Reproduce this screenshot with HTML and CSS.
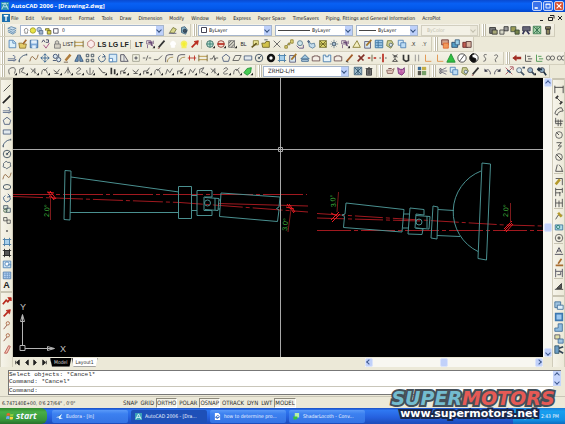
FILE: index.html
```html
<!DOCTYPE html>
<html lang="en">
<head>
<meta charset="utf-8">
<title>AutoCAD 2006 - [Drawing2.dwg]</title>
<link rel="stylesheet" href="styles.css">
</head>
<body>
<header class="title">
  <svg class="app-icon" viewBox="0 0 10 10"><rect width="10" height="10" fill="#2b8fb0"/><path d="M1 9 5 1l4 8M3 6h5M1 2h3M7 2h2" fill="none" stroke="#d9f4f4"/></svg>
  <h1>AutoCAD 2006 - [Drawing2.dwg]</h1>
  <div class="window-buttons">
    <button aria-label="Minimize"><svg viewBox="0 0 10 10"><path d="M2 7.500h4" stroke="#fff" stroke-width="2"/></svg></button>
    <button aria-label="Restore"><svg viewBox="0 0 10 10"><path d="M2.500 2.500h5v5h-5zM2 3h6" fill="none" stroke="#fff"/></svg></button>
    <button class="close" aria-label="Close"><svg viewBox="0 0 10 10"><path d="m2 2 6 6M8 2 2 8" stroke="#fff" stroke-width="1.500"/></svg></button>
  </div>
</header>
<nav class="menu">
  <svg class="doc-icon" viewBox="0 0 9 9"><rect width="9" height="9" fill="#1c6fae"/><path d="M2 2h5M4.500 2v6" stroke="#fff" stroke-width="1.500"/></svg>
  <a href="#">File</a><a href="#">Edit</a><a href="#">View</a><a href="#">Insert</a><a href="#">Format</a><a href="#">Tools</a><a href="#">Draw</a><a href="#">Dimension</a><a href="#">Modify</a><a href="#">Window</a><a href="#">Help</a><a href="#">Express</a><a href="#">Paper Space</a><a href="#">TimeSavers</a><a href="#">Piping, Fittings and General Information</a><a href="#">AcroPlot</a>
  <div class="doc-buttons">
    <button aria-label="Minimize drawing"><svg viewBox="0 0 8 8"><path d="M2 6.500h3" stroke="#222"/></svg></button>
    <button aria-label="Restore drawing"><svg viewBox="0 0 8 8"><path d="M3 1.500h4v3M1.500 3.500h4v3h-4z" fill="none" stroke="#222"/></svg></button>
    <button aria-label="Close drawing"><svg viewBox="0 0 8 8"><path d="m2 2 4 4M6 2 2 6" stroke="#222"/></svg></button>
  </div>
</nav>

<section class="row">
  <div class="bar">
    <div class="icons" data-icons="layers"></div>
    <div class="combo layer">
      <svg viewBox="0 0 42 10"><path d="M3 6a2 2 0 1 1 3 0v2H3z" fill="#fff" stroke="#888"/><circle cx="12" cy="5" r="3" fill="#e8e448" stroke="#a5a02c"/><circle cx="19" cy="4" r="2.500" fill="#b4c4dc" stroke="#6d86a8"/><path d="M19 5h4v4h-4z" fill="#9fb2cc" stroke="#5f7595"/><path d="M26 5V3h4v3M28 5h4v4h-4z" fill="#d8d24a" stroke="#77702a"/><path d="M35 3h5v5h-5z" fill="#fff" stroke="#556"/></svg>
      <select aria-label="Layer"><option>0</option></select>
    </div>
    <div class="icons" data-icons="prevlayer|layers2"></div>
  </div>
  <div class="bar">
    <div class="combo color"><svg viewBox="0 0 6 6"><path d="M.500.500h5v5h-5z" fill="#fff" stroke="#445"/></svg><select aria-label="Color"><option>ByLayer</option></select></div>
    <div class="combo linetype"><i class="sample"></i><select aria-label="Linetype"><option>ByLayer</option></select></div>
    <div class="combo weight"><i class="sample"></i><select aria-label="Lineweight"><option>ByLayer</option></select></div>
    <div class="combo plot"><select aria-label="Plot style" disabled><option>ByColor</option></select></div>
  </div>
  <div class="bar"><div class="icons" data-icons="blk1|blk2|blk3|blk4|gridg|blk5"></div></div>
</section>
<section class="row tall">
  <div class="bar standard"><div class="icons" data-icons="new|open|save|spell|lock|t:LIST|dist|poly|b:LS|b:LG|b:LF|-|b:LT|tools|pen|bulbw|bulby|redarrow|-|globe|globered|hatch|t:BL|ycopy|folder|cross|nodes|lens|hand|ygrid|burst|tools|ytri|pencilbox|bgrid|paste|copyb|t:.X|t:.Y"></div></div>
  <div class="bar"><div class="icons" data-icons="orangebox|bluebox|redbox"></div></div>
</section>
<section class="row">
  <div class="bar modify"><div class="icons" data-icons="pline|arc|spline|move|copy|pencil|mirror|array|rotate|scale|stretch|point|break1|break2|fillet|fillet|reddim|dist|wave|poly2|para|rect|compass|donut|crop|pencilbox|btri|tab|tabb|tab|pen2|redtool|redcross|redbar|figure|u|bars|ol|ol|gtri|noslash|yin|s|q"></div></div>
  <div class="bar last"><div class="icons" data-icons="redleft|lab|labg|eyes|eyes"></div></div>
</section>
<section class="row">
  <div class="bar lisp"><div class="icons" data-icons="n1|n2|n3|n4|n5|n6|n7|n8|n9|n10|n11|n5|n11|n4|n12|n11|n12|n2|n3|n7|n4|green"></div></div>
  <div class="bar gapped"><div class="combo style"><select aria-label="Text style"><option>ZRHD-L/H</option></select></div><div class="icons" data-icons="bgridd|trash"></div></div>
  <div class="bar gapped"><div class="icons" data-icons="teapot|cat"></div></div>
  <div class="bar gapped"><div class="icons" data-icons="palette"></div></div>
  <div class="bar gapped"><div class="icons" data-icons="cut|copyb|paste|pen|undo|redo|pan|zoom|zoomd|zoomp"></div></div>
</section>

<main class="work">
  <aside class="side left">
    <div class="icons" data-icons="line|xline|pline|poly2|rect|arc|compass|cloud|spline|ellipse|rotate|insert|block|dot|crop|darkgrid|region|table|b:A"></div>
    <div class="icons loose" data-icons="redpoly|redarrow|redtag|redtag|redpen"></div>
  </aside>
  <svg class="drawing" viewBox="13 78 530 279" role="img" aria-label="Driveline drawing">
    <g class="axis">
      <path d="M13 194.500H307" stroke-dasharray="40 3 4 3"/>
      <path d="M13 196.500 180 202.500 308 212" stroke-dasharray="30 3 4 3"/>
      <path d="M218 203.500 308 206"/>
      <path d="M317 213.500 404 219 505 225 543 226" stroke-dasharray="28 3 4 3"/>
      <path d="M317 218 420 221" stroke-dasharray="28 3 4 3"/>
      <path d="M317 230.500H543" stroke-dasharray="34 3 4 3"/>
    </g>
    <g class="part">
      <path d="M65 170.500 71 171 70 220 64 219.500ZM71 177 179 192M70 212.500H179M178.500 186.500h13v32h-13zM191.500 195.500h5.500M191.500 210.500h5.500"/>
      <path d="M197 190.500h15v6.500h-8v13.500h8v5h-15zM205 197.500 219 198.500 218 210.500 205 209.500M215 198v12M219 200h2M218 209h2"/>
      <circle cx="207.500" cy="203" r="3"/>
      <path d="M221 193 280 197 279 207 276.500 208.500 279 210 277.500 221.500 219.500 216.500Z"/>
      <path d="M346 203 404 209.500 402 232 343.500 227.500 344.500 216.500 342 215 345 214ZM404 214h5M403 228h5"/>
      <path d="M410 208 424 209.500 424 215 416 214 415 228 423 229 422 234.500 408 234ZM416 215.500 430 216.500 429 229 416 228M427 216v12"/>
      <circle cx="419" cy="222" r="3"/>
      <path d="M433 206 438 207 437 239 431 238ZM438 209.500 454 210.500M437 235.500 460 236.500M481 171A44 44 0 0 0 478 251.500M482 163 490.500 164 486.500 260 478 258.500Z"/>
    </g>
    <g class="mark">
      <path d="m48 192 6 8M50 191l6 8M47 192l7 1M49 196l6 3"/>
      <path d="m287 204 7 9M289 204l6 8M286 207l8 2"/>
      <path d="m331 220 8-8M332 222l8-8M331 213l6 3"/>
      <path d="m504 229 8-8M504 231l8-8M506 232l7-8"/>
    </g>
    <path class="leader" d="M50.500 195v25M291 209l-3 23M338.500 192 337 212M510.500 203v20"/>
    <g class="angle">
      <text transform="translate(49 217) rotate(-88)">2.0°</text>
      <text transform="translate(287 231) rotate(-84)">3.0°</text>
      <text transform="translate(336 207) rotate(-94)">3.0°</text>
      <text transform="translate(508 217) rotate(-88)">2.0°</text>
    </g>
    <g class="cursor"><path d="M13 149.500H543M280.500 78V357"/><path d="M278.500 147.500h4v4h-4z"/></g>
    <g class="ucs"><path d="M20 345.500h5v5h-5zM22.500 345.500V315M25 348.500H54M22.500 314.500l-2 7h4zM54.500 348.500l-7-2v4z"/>
      <text x="20" y="310">Y</text><text x="60" y="352">X</text></g>
  </svg>
  <div class="scroll vertical">
    <button class="up" aria-label="Scroll up"></button><i class="thumb"></i><button class="down" aria-label="Scroll down"></button>
  </div>
  <aside class="side right">
    <div class="icons" data-icons="dimh|dima|arcd|ord|-|circ|jog|diam|ang|-|quick|base|cont|-|lead|tol|center|-|edit|tedit|upd|-|dstyle"></div>
    <div class="icons order" data-icons="o1|o2|o3|o4|o5"></div>
  </aside>
  <div class="tabs">
    <div class="tab-nav">
      <button aria-label="First tab"><svg viewBox="0 0 8 8"><path d="M2 2v4M6 1v6L3 4z"/></svg></button>
      <button aria-label="Previous tab"><svg viewBox="0 0 8 8"><path d="M6 1v6L3 4z"/></svg></button>
      <button aria-label="Next tab"><svg viewBox="0 0 8 8"><path d="M2 1v6l3-3z"/></svg></button>
      <button aria-label="Last tab"><svg viewBox="0 0 8 8"><path d="M2 1v6l3-3zM6 2v4"/></svg></button>
    </div>
    <button class="tab active">Model</button><button class="tab">Layout1</button>
    <div class="scroll horizontal">
      <button class="prev" aria-label="Scroll left"></button><i class="thumb"></i><button class="next" aria-label="Scroll right"></button>
    </div>
  </div>
</main>

<section class="command">
  <div class="console">
    <p>Select objects: *Cancel*</p>
    <p>Command: *Cancel*</p>
    <div class="prompt"><label for="cmd">Command:</label><input id="cmd" type="text" autocomplete="off"></div>
  </div>
  <div class="command-scroll"><button class="up" aria-label="Scroll history up"></button><button class="down" aria-label="Scroll history down"></button></div>
</section>
<section class="status">
  <output>6.747140E+00, 0'6 27/64" , 0'0"</output>
  <button>SNAP</button><button>GRID</button><button class="on">ORTHO</button><button>POLAR</button><button class="on">OSNAP</button><button>OTRACK</button><button>DYN</button><button>LWT</button><button class="on">MODEL</button>
</section>
<footer class="taskbar">
  <button class="start"><svg viewBox="0 0 10 10"><path d="M1 2q2-1.500 4 0L4.500 5q-2-1-4 0z" fill="#f0602c"/><path d="M5.500 2q2 1.500 4 0L9 5q-2 1-4 0z" fill="#8ccf3c"/><path d="M.500 5.500q2-1 4 0L4 9Q2 8 0 9z" fill="#6ca8f8"/><path d="M5 5.500q2 1.500 4 0L8.500 9q-2 1-4 0z" fill="#fcd53c"/></svg>start</button>
  <button class="task"><svg viewBox="0 0 8 8"><path d="M0 5 7 1 5 5 8 6 4 7 3 5z" fill="#dff2ff"/><path d="m2 4 3-2" stroke="#2a6fae"/></svg>Eudora - [In]</button>
  <button class="task current"><svg viewBox="0 0 8 8"><rect width="8" height="8" fill="#3aa0b8"/><path d="m1 7 3-6 3 6M2 5h4" fill="none" stroke="#e4fbfb"/></svg>AutoCAD 2006 - [Dra...</button>
  <button class="task"><svg viewBox="0 0 8 8"><path d="M1 0h4l2 2v6H1z" fill="#fff"/><path d="M2 5q2-4 4-1Q4 8 2 5h4" fill="none" stroke="#2b66c8"/></svg>how to determine pro...</button>
  <button class="task"><svg viewBox="0 0 8 8"><path d="M2 0h5v5H2z" fill="#b8f0a8"/><path d="M0 4h5v3H3L1 8z" fill="#38c43c"/></svg>ShadarLocoth - Conv...</button>
  <div class="tray"><svg viewBox="0 0 16 8"><circle cx="4" cy="4" r="3" fill="#3b9df0" stroke="#9ed4ff"/><path d="m5 2-2 2 2 2" fill="none" stroke="#fff"/><circle cx="12" cy="4" r="3" fill="#a8d848"/></svg><time>2:43 PM</time></div>
</footer>
<div class="watermark"><strong><span>SUPER</span><em>MOTORS</em></strong><small>www.supermotors.net</small></div>
<script src="icons.js"></script>
</body>
</html>
```

FILE: styles.css
```css
* { box-sizing: border-box; }
html, body { height: 100%; }
body {
  --face: #ece9d8;
  --ink: #2b2b2b;
  margin: 0;
  display: flex;
  flex-direction: column;
  position: relative;
  overflow: hidden;
  background: var(--face);
  color: var(--ink);
  font: 5px/8px "DejaVu Sans Condensed", "DejaVu Sans", sans-serif;
}
button {
  margin: 0;
  padding: 0;
  border: 0;
  background: none;
  color: inherit;
  font: inherit;
  white-space: nowrap;
}
h1, p { margin: 0; font: inherit; }
svg { display: block; flex: none; }

.title {
  flex: none;
  height: 12px;
  display: flex;
  align-items: center;
  gap: 2px;
  padding: 0 1px;
  background: linear-gradient(#0a4ad0, #0860f4 30%, #0358ea 70%, #0246cc);
  color: #fff;
}
.title h1 { flex: 1; font: bold 6px/10px "Open Sans", sans-serif; }
.app-icon { width: 8px; height: 8px; }
.window-buttons { display: flex; gap: 1px; }
.window-buttons button { width: 10px; height: 10px; border: 1px solid #c3d3f8; border-radius: 2px; background: #3a72ea; }
.window-buttons .close { background: #da5030; }

.menu { flex: none; height: 12px; display: flex; align-items: center; gap: 7px; padding: 0 1px; }
.menu a { color: #111; text-decoration: none; white-space: nowrap; }
.doc-icon { width: 8px; height: 8px; margin-right: -6px; margin-left: 1px; }
.doc-buttons { margin-left: auto; display: flex; gap: 1px; }
.doc-buttons button { width: 8px; height: 8px; }

.row { flex: none; height: 13px; display: flex; gap: 1px; }
.row.tall { height: 15px; }
.bar {
  flex: none;
  display: flex;
  align-items: center;
  gap: 3px;
  padding: 0 1px 0 6px;
  border-right: 1px solid #d0ccba;
  border-bottom: 1px solid #d4d0be;
  background: linear-gradient(90deg, transparent 1px, #fff 1px 2px, #bfbba8 2px 3px, #fff 3px 4px, #bfbba8 4px 5px, transparent 5px), linear-gradient(#f4f2e8, var(--face));
}
.bar.gapped { padding-right: 2px; }
.bar.standard { width: 432px; }
.bar.modify { width: 504px; }
.bar.lisp { width: 256px; }
.bar.last { flex: 1; overflow: hidden; }
.icons { flex: none; display: flex; align-items: center; }
.standard .icons, .modify .icons, .lisp .icons { flex: 1; }
.standard .tool, .modify .tool, .lisp .tool { flex: 1 1 0; }
.tool { width: 11px; height: 11px; display: grid; place-items: center; }
.tool svg { width: 10px; height: 10px; fill: none; stroke: #333; stroke-width: 1; }
.tool.word { font: 5px/11px "Liberation Sans", sans-serif; color: #222; }
.tool.strong { font: bold 7px/11px "Liberation Sans", sans-serif; color: #222; }
.split { flex: none; width: 3px; height: 9px; border-left: 1px solid #c8c4b2; }

.combo {
  position: relative;
  display: flex;
  align-items: center;
  height: 11px;
  border: 1px solid #a5b5cc;
  background: #fff;
}
.combo::after {
  content: "";
  position: absolute;
  right: 0;
  top: 0;
  width: 7px;
  height: 9px;
  background: #bdd0fa;
  pointer-events: none;
}
.combo::before {
  content: "";
  position: absolute;
  z-index: 1;
  right: 2px;
  top: 2px;
  width: 3px;
  height: 3px;
  border: solid #35517f;
  border-width: 0 1px 1px 0;
  transform: rotate(45deg);
  pointer-events: none;
}
.combo select {
  flex: 1;
  min-width: 0;
  height: 9px;
  padding: 0 2px;
  border: 0;
  appearance: none;
  background: none;
  color: #222;
  font: inherit;
}
.combo svg { width: 6px; height: 6px; margin-left: 2px; }
.layer { width: 144px; }
.layer svg { width: 38px; height: 9px; margin-left: 1px; }
.color { width: 74px; }
.linetype { width: 78px; }
.weight { width: 62px; }
.plot { width: 57px; border-color: #d2cfc0; background: #f3f1e6; }
.plot select { padding-left: 5px; color: #c2bfae; opacity: 1; }
.plot::after { background: #ebe8da; }
.plot::before { border-color: #c2bfae; }
.style { width: 86px; }
.style select { font-size: 6px; padding-left: 4px; }
.sample { width: 32px; height: 1px; margin-left: 2px; background: #444; }
.weight .sample { width: 17px; }

.work {
  flex: 1;
  min-height: 0;
  display: grid;
  grid-template: minmax(0, 1fr) 10px / 13px minmax(0, 1fr) 9px 13px;
}
.side { grid-row: 1 / 3; display: flex; flex-direction: column; align-items: center; background: linear-gradient(90deg, #f6f4ea, var(--face)); border: solid #d0ccba; border-width: 0 1px; }
.side .icons { flex-direction: column; padding-top: 2px; border-top: 2px solid #c9c5b3; }
.side .split { width: 9px; height: 2px; border: 0; border-top: 1px solid #c8c4b2; }
.left .loose .tool { height: 12px; }
.left .tool.strong { font-size: 9px; }
.right .icons { padding-top: 3px; }
.right .order { margin-top: 4px; }
.drawing { width: 100%; height: 100%; background: #000; fill: none; stroke-width: 1; }
.axis { stroke: #a0191f; }
.part { stroke: #4a9090; }
.mark { stroke: #f01c22; }
.leader { stroke: #7c1a1c; }
.angle { fill: #3fae3c; font: 7px "Liberation Sans", sans-serif; }
.cursor { stroke: #a8a8a8; }
.ucs { stroke: #b4b4b4; }
.ucs text { fill: #c0c0c0; stroke: none; font: 9px "Liberation Sans", sans-serif; }

.scroll { display: flex; align-items: center; justify-content: space-between; background: #f8f7f1; }
.vertical { flex-direction: column; }
.scroll button, .thumb { width: 8px; height: 9px; border: 1px solid #dbe4fb; border-radius: 2px; background: #c1d1fa; }
.up, .down, .prev, .next { display: grid; place-items: center; }
.up::before, .down::before, .prev::before, .next::before {
  content: "";
  width: 3px;
  height: 3px;
  border: solid #3f5a90;
  border-width: 1px 1px 0 0;
  transform: rotate(-45deg);
}
.down::before { transform: rotate(135deg); }
.prev::before { transform: rotate(-135deg); }
.next::before { transform: rotate(45deg); }
.vertical .thumb { margin-top: 20px; }
.horizontal { width: 178px; margin-left: auto; }
.horizontal .thumb { margin-right: 20px; }

.tabs { grid-column: 2 / 4; grid-row: 2; display: flex; align-items: center; padding-right: 9px; }
.tab-nav { display: flex; margin-right: 1px; }
.tab-nav button { width: 9px; height: 8px; display: grid; place-items: center; }
.tab-nav svg { width: 7px; height: 7px; fill: #222; stroke: #222; stroke-width: 1; }
.tab { height: 9px; padding: 0 3px; background: #fff; border: solid #555; border-width: 0 1px 1px; clip-path: polygon(0 0, 100% 0, calc(100% - 2px) 100%, 2px 100%); }
.tab.active { background: #000; color: #ddd; }

.command { flex: none; height: 29px; display: flex; padding: 3px 4px 1px 8px; }
.console { flex: 1; border: 1px solid #777; border-right: 0; background: #fff; font: 6px/7px "Liberation Mono", monospace; display: flex; flex-direction: column; }
.prompt { flex: 1; margin-top: 1px; display: flex; align-items: center; border-top: 1px solid #c9c6ba; }
.prompt input { flex: 1; min-width: 0; height: 7px; padding: 0 2px; border: 0; outline: 0; background: none; font: inherit; }
.command-scroll { width: 8px; height: 16px; background: #fff; border-top: 1px solid #777; display: flex; flex-direction: column; }
.command-scroll button { flex: 1; background: #c6d5fb; }

.status { flex: none; height: 12px; display: flex; align-items: center; gap: 1px; padding: 0 2px; border-top: 1px solid #c9c6b6; font-size: 6px; }
.status output { width: 119px; font-size: 5px; }
.status button { height: 10px; line-height: 8px; border: 1px solid transparent; }
.status .on { border-color: #8d8a7c #fff #fff #8d8a7c; background: #f4f2e8; }

.taskbar { flex: none; height: 16px; display: flex; align-items: center; gap: 3px; background: linear-gradient(#1a4fc4, #2f78f2 15%, #2560de 60%, #1c4bb8); color: #f0f6ff; }
.start { width: 47px; height: 16px; margin-right: 2px; display: flex; align-items: center; gap: 2px; padding: 0 6px; border-radius: 0 6px 6px 0; background: linear-gradient(#2f8a2e, #48ae47 25%, #37953a 75%, #27702a); font: italic bold 9px/14px "Open Sans", sans-serif; }
.start svg { width: 8px; height: 8px; }
.task { width: 76px; height: 13px; display: flex; align-items: center; gap: 3px; padding: 0 4px; border-radius: 2px; background: linear-gradient(#5a9af8, #3c80f0 30%, #3474e4); overflow: hidden; }
.task svg { width: 7px; height: 7px; }
.task.current { background: #1e50b8; }
.tray { margin-left: auto; width: 52px; height: 16px; display: flex; align-items: center; justify-content: flex-end; gap: 4px; padding: 0 6px 0 0; background: linear-gradient(#1a7cd8, #18a0f0 20%, #1290e4 75%, #0c6cc0); }
.tray svg { width: 16px; height: 8px; }

.watermark { position: absolute; right: 6px; bottom: 4px; width: 172px; display: flex; flex-direction: column; align-items: center; font-family: "DejaVu Sans", sans-serif; font-weight: bold; -webkit-text-stroke: 4px #444f58; paint-order: stroke fill; }
.watermark strong { font: italic bold 19px/19px "DejaVu Sans", sans-serif; color: #74bccf; }
.watermark em { color: #e65a55; }
.watermark small { padding-right: 8px; font-size: 11px; line-height: 12px; color: #fff; -webkit-text-stroke-color: #18264a; }
```

FILE: icons.js
```js
// Stroke-based tool icons on a 12x12 grid.
const p = (d, stroke = '#333', fill = 'none', w = 1) =>
  `<path d="${d}" stroke="${stroke}" fill="${fill}" stroke-width="${w}"/>`;
const c = (x, y, r, stroke = '#333', fill = 'none', w = 1) =>
  `<circle cx="${x}" cy="${y}" r="${r}" stroke="${stroke}" fill="${fill}" stroke-width="${w}"/>`;
const BLUE = '#4a7fb4', GOLD = '#b59a2c', RED = '#b8281c', ORANGE = '#e08a3c';
const corner = p('M9 11h3V8z', 'none', '#222');

const ICONS = {
  layers: p('M1 4 5 2l6 2-4 2zM1 6l6 3 4-3M1 8l6 3 4-3', '#5d86a8', '#c6dcec'),
  prevlayer: p('M2 9 6 3l4 2-3 5z', '#777a3c', '#d8d68c') + p('M1 10h9', '#557'),
  layers2: p('M3 3l4-1 3 4-2 5-5-2z', '#3c5f78', '#8fb6c8') + c(7, 7, 2, '#234', '#456'),
  blk1: p('M2 3h7v7H2z', '#333', '#777') + p('M5 6h6v5H5z', '#333', '#a8a878'),
  blk2: p('M6 2h5v5H6z', '#333', '#999') + p('M1 6h5v5H1z', '#444', '#d8d8c8'),
  blk3: p('M1 2h6v6H1z', '#454', '#9b9b54') + p('M6 6h5v5H6z', '#343', '#77834c'),
  blk4: p('M2 2h9v5H2z', '#334', '#667') + p('M4 7l-2 4M7 7l3 4', '#335', 'none', 2),
  gridg: p('M1.500 1.500h9v9h-9z', '#377a4c', '#a5d0a8') + p('m2 2 8 8M10 2l-8 8M6 2v8', '#2c6b48'),
  blk5: p('M3 2h6v3H3zM4 5h4v6H4z', '#333', '#8b845c'),
  new: p('M2.500 1.500h5l3 3v6h-8z', BLUE, '#dcf0fa') + p('M7 2v3h3', BLUE),
  open: p('M1 5h4l1 1h4l-1 5H2z', '#8b7430', '#e3cb68') + p('m6 6 4-5', '#a5682c', 'none', 2),
  save: p('M1.500 1.500h9v9h-9z', '#34659c', '#7ea9d8') + p('M3 2h6v3H3zM4 8h4v3H4z', '#cfe2f4', '#e8f2fa'),
  spell: p('M1 4 3 1l2 3M6 1h3v3H6', '#335') + p('M3 7l3 4 4-6', '#a0407c'),
  lock: p('M3 6h7v5H3zM4 6V3l2-1 2 1v3', '#777', '#d4d0c4'),
  dist: p('M1 4h10M1 8h10', '#b08c30', 'none', 1) + p('M1 2v8M11 2v8', '#6b5828'),
  poly: p('M6 1 10 4v4l-4 3-4-3V4z', '#b87470', '#fbecec'),
  tools: p('M2 2h5v4H2zM7 6l4 4M3 11V7M10 2v4', '#7c6084', 'none', 1) + p('M4 4h4v4', '#6c4c78', 'none', 2) + corner,
  pen: p('m2 10 7-8', '#333', 'none', 2) + p('M1 11h2', '#833'),
  pen2: p('m2 10 7-8', '#a05c28', 'none', 2) + p('M1 10l3 1', '#333'),
  bulbw: p('M4 8a3 3 0 1 1 4 0v2H4z', '#fff', '#fff'),
  bulby: p('M4 8a3 3 0 1 1 4 0v2H4z', '#f4ee60', '#f4f030', 2),
  redarrow: p('m2 10 5-5', RED, 'none', 2) + p('M5 3l5-1-1 5z', RED, RED),
  globe: c(6, 6, 4, '#34655c', '#b8dcd0') + p('M6 2v8M2 6h8', '#2b786b') + corner,
  globered: c(6, 6, 4, '#883028', '#f4dcd0') + p('M2 6h8', RED, 'none', 2) + corner,
  hatch: p('M2 2h7v8H2z', '#777', '#d4d2c6') + p('m2 5 3-3M2 9l7-7M5 10l4-4', '#555') + corner,
  ycopy: p('M4 2h6v5H4z', '#8a8235', '#efe99a') + p('m2 10 6-5', '#665a20', 'none', 2),
  folder: p('M1 5h4l1-2h4v7H2z', '#6f6420', '#d2c24c') + p('M4 1h4', '#456'),
  cross: p('m2 2 8 8M10 2l-8 8', '#555'),
  nodes: p('M3 8l5-4', '#555') + p('M1 8h3v3H1zM8 1h3v4H8zM5 5h2v2H5z', '#8a7d2c', '#e6dc80'),
  lens: c(6, 5, 3, '#557a8c', '#cfe4ea') + p('M2 8l3 3h5V7', '#547'),
  hand: p('M3 2l3 4 4-1 1 4-3 2-4-2z', '#577e9c', '#c4dcec') + c(3, 3, 1, '#346'),
  ygrid: p('M2 2h8v8H2z', '#6f6a2a', '#e2da70') + p('m2 2 8 8M2 6h8M10 2l-8 8', '#665f22'),
  burst: p('M6 1v10M1 6h10M3 3l6 6M9 3 3 9', '#66808c') + c(6, 6, 2, '#567', '#a5bdd0'),
  ytri: p('M6 2 10 10H1z', '#82772a', '#f4efc0'),
  pencilbox: p('M2 3h7v8H2z', '#557', '#d7e6ef') + p('m4 8 6-7', '#a5762c', 'none', 2),
  bgrid: p('M1.500 1.500h9v9h-9z', '#2f6c9c', '#a5cdec') + p('M2 4.500h8M2 7.500h8M5 2v8', '#386f98'),
  bgridd: p('M1.500 1.500h9v9h-9z', '#41617c', '#9bb8c8') + p('m2 2 8 8M10 2l-8 8M6 2v8', '#2f5168'),
  paste: p('M3 2h5l2 4-3 5-5-3z', '#73783a', '#d0d294') + c(7, 7, 2, '#567', '#dbe8ee'),
  copyb: p('M1.500 1.500h6v6h-6z', BLUE, '#d8ecf8') + p('M4.500 4.500h6v6h-6z', BLUE, '#bcdcf4'),
  orangebox: p('M2 1h8v6H2z', '#633', '#d4a48c') + p('M4 5h6v6H4z', '#e0662c', '#f09a5c'),
  bluebox: p('M1 4h7v6H1z', '#246', '#54a0c8') + p('M5 1h5v6H5z', '#357', '#9cd0e8'),
  redbox: p('M1 4h6v6H1z', '#622', '#c05c50') + p('M5 3h6v7H5z', '#533', '#d9b4a0'),
  pline: p('M1 7h7a2 2 0 0 0-1-4M1 9h8M8 7l3 1-3 2', '#556688'),
  arc: p('M1 10Q3 3 10 2', '#334c6c') + p('M1 10h1M10 2h1', '#234', 'none', 2),
  spline: p('M1 10Q3 1 6 6t5-4', '#8a6238'),
  move: p('M6 1v10M1 6h10M4 3l2-2 2 2M4 9l2 2 2-2M3 4 1 6l2 2M9 4l2 2-2 2', '#2d5c8c'),
  copy: c(4, 4, 2.5, '#346', '#dbe8f0') + c(8, 8, 2.5, '#346', '#dbe8f0') + p('M8 1v4M1 9h4', '#346'),
  pencil: p('m3 9 6-7', '#b07d3c', 'none', 3) + p('M1 11h5', '#654'),
  mirror: p('M5 2v8H1zM7 2v8h4z', '#2c4c74', '#6f9cc4'),
  array: p('M1.500 1.500h3v3h-3zM7.500 1.500h3v3h-3zM1.500 7.500h3v3h-3zM7.500 7.500h3v3h-3z', '#345'),
  rotate: p('M4 3a4 4 0 1 0 5 1M7 1l3 3-4 1', '#35557c'),
  scale: p('M1.500 1.500h9v9h-9z', BLUE, '#d8ecf8') + p('M1.500 6.500h4v4h-4z', BLUE, '#fff'),
  stretch: p('M2 2h4l5 8H2z', '#445', '#e8e8e2') + p('M6 2v8', '#778'),
  point: p('M2 2h8v8H2z', '#998', '#f3f3e4') + p('M4 6h4M6 4v4', '#334'),
  break1: p('M1 6h3M8 6h3M7 3 5 9', '#555'),
  break2: p('M1 8h5M6 8l5-5', '#555'),
  fillet: p('M2 11V6q0-4 4-4h5', '#445') + p('M4 11q0-6 7-6', '#a08848'),
  reddim: p('M1 6h10M3 3v6M9 3v6', RED),
  wave: p('M1 7h3l2-4 1 6 1-3h3', '#555'),
  poly2: p('M6 1.500 10.500 5 9 10H3L1.500 5z', '#445577'),
  para: p('M4 3h7L8 9H1z', '#555'),
  rect: p('M1.500 3.500h9v5h-9z', '#4c5f7c', '#e2e9ee'),
  compass: c(6, 6, 4.5, '#345') + p('m6 6 3-3', '#345') + c(6, 6, 1, '#345'),
  donut: c(6, 6, 3.5, '#111', '#fff', 3),
  crop: p('M3 1v10M9 1v10M1 3h10M1 9h10', '#3e6c94') + p('M3 3h6v6H3z', '#4c84b0', '#a8d0ec'),
  darkgrid: p('M3 1v10M9 1v10M1 3h10M1 9h10', '#222') + p('M3 3h6v6H3z', '#222', '#555'),
  btri: p('M6 2 11 7H1z', '#37628c', '#a0c8e0') + p('M2 8h8v2H2z', '#37628c', '#c8e0ee'),
  tab: p('M1.500 4.500h2v-1h5v1h2v5h-9z', '#654848', '#f4eee6'),
  tabb: p('M1.500 2.500h3v2h3v-2h3v8h-9z', '#4076a8', '#e8f4fa'),
  redtool: p('m2 10 8-8M3 3l6 6', '#823028', 'none', 2),
  redcross: p('M6 2v8', '#553', 'none', 1) + p('M1 6h3M8 6h3', RED, 'none', 2),
  redbar: p('M6 1v10', RED, 'none', 2) + p('M2 6h1M9 6h1', '#333', 'none', 2),
  figure: p('M3 2l6 3M9 2 4 5M6 4v3M3 10l3-3 3 3z', '#333'),
  u: p('M3 2v6l3 2 3-1V2', '#333', 'none', 2),
  bars: p('M4 2v8M8 2v8', '#888', 'none', 1),
  ol: p('M3 2v8h7', ORANGE, 'none', 1),
  gtri: p('M6 1 11 11H1z', '#1c8a30', '#30c040'),
  noslash: c(6, 6, 5, '#333', '#fff') + p('m3 10 6-8', '#333'),
  yin: c(6, 6, 5, '#222', '#fff') + p('M6 1a5 5 0 0 0 0 10 2.500 2.500 0 0 0 0-5 2.500 2.500 0 0 1 0-5', '#111', '#111'),
  s: p('M8 2Q4 1 5 4l2 3q0 3-3 3', '#555'),
  q: p('M4 3q4-2 4 1L5 8l1 3', '#555'),
  redleft: p('M11 6H5', '#a02c24', 'none', 3) + p('M5 3v6L1 6z', '#a02c24', '#a02c24'),
  lab: p('M3 2v8h7M5 4h4M6 7h5', '#444', 'none', 1),
  labg: p('M3 2v8h7M5 4h4M6 7h5', '#3c9044', 'none', 1),
  eyes: c(4, 6, 2.5, '#555') + c(9, 6, 2.5, '#555'),
  green: p('m1 8 4-5 5-1-1 6-4 3z', '#1f8a34', '#48cc54') + corner,
  trash: p('M3 4h6v7H3zM2 3h8M5 2h2M5 5v5M7 5v5', '#333', '#888'),
  teapot: p('M2 5h6l3-2-2 6H3z', '#88625c', '#e0c4b8') + p('M4 3h4', '#633'),
  cat: p('M2 2l3 2h3l2-2v6l-3 3-4-2z', '#703478', '#c060a8') + p('M4 6h1M8 6h1', '#fff'),
  palette: p('M1 1h4v4H1z', 'none', '#3c6c98') + p('M6 1h5v4H6z', 'none', '#c4b048') + p('M1 6h4v5H1z', 'none', '#54544c') + p('M6 6h5v5H6z', 'none', '#77a068'),
  cut: p('M1 6h10M4 5l6-3M4 7l6 3', '#667') + c(3, 4, 1, '#445') + c(3, 8, 1, '#445'),
  undo: p('M4 6q4-4 6 2v2', '#445') + p('M3 3v4h4z', 'none', '#334'),
  redo: p('M8 6Q4 2 2 8v2', '#445') + p('M9 3v4H5z', 'none', '#334'),
  pan: p('m2 2 8 8M2 10l8-8M7 1h4v4', '#a0404c') + p('M4 5l4 3', '#357', 'none', 2),
  zoom: c(5, 5, 3, '#567', '#d8e8f0') + p('m7 7 4 4M9 2h3', '#456', 'none', 2),
  zoomd: c(5, 5, 3, '#445', '#9ab8cc') + p('m7 7 3 3', '#345', 'none', 2) + corner,
  zoomp: c(6, 5, 3, '#445', '#88a8c0') + p('M1 4h5M3 2 1 4l2 2M8 7l3 4', '#234', 'none', 2),
  line: p('m2 10 8-8', '#333'),
  xline: p('m1 11 9-9', '#222', 'none', 2),
  cloud: p('M3 3q2-3 4 0 4-1 3 2 2 3-2 4-3 3-4 0-4 0-2-3-1-2 1-3', '#456'),
  ellipse: '<ellipse cx="6" cy="6" rx="4.500" ry="3" stroke="#345"/>',
  insert: p('M2 2h5v4H2zM5 5h5v5H5z', '#456', '#dce8dc') + c(4, 8, 2, '#464'),
  block: p('M2 3h4v4H2zM6 6h4v4H6z', '#555', '#e8e8d8'),
  dot: p('M5 6h2', '#444', 'none', 2),
  region: p('M1.500 2.500h9v8h-9z', BLUE, '#d0e4f4') + c(6, 6, 2.5, BLUE, '#fff') + p('M7 7h4', BLUE),
  table: p('M1.500 2.500h9v8h-9z', '#4a78ac', '#b8d4f4') + p('M2 5h8M2 8h8M5 3v7M8 3v7', '#6f98c4'),
  redpoly: p('M1 10l4-5 2 2 3-4', RED, 'none', 2) + p('M7 2h4v4z', RED, RED),
  redtag: c(7, 4, 2, '#a8603c') + p('m6 6-4 5', '#8c4c38'),
  redpen: p('M3 11 8 2l2 1-4 8z', '#b85048', '#f4cabc'),
  dimh: p('M1 2v9M11 2v9M1 4h10', '#333'),
  dima: p('m3 3 6 6', '#333', 'none', 1) + p('M2 4l3-3M7 11l3-3', '#333', 'none', 2),
  arcd: p('M1 9Q3 2 9 2M4 11q1-5 7-5M1 9l3 2M9 2l2 4', '#444'),
  ord: p('M2 1v7h8M5 11V3M1 5h10M8 3v8', '#444'),
  circ: c(6, 6, 4, '#555') + p('M6 6 3 3', '#333'),
  jog: p('M3 2h6L5 6h4l-5 5', '#444'),
  diam: c(6, 6, 4, '#555') + p('m3 3 6 6', '#333'),
  ang: p('M4 2 2 10h9M6 2q4 3 4 8', '#444'),
  quick: p('M2 3h8v8', '#444') + p('m2 10 5-6', GOLD, '#ddd04c', 3),
  base: p('M2 1v10M10 1v6M2 3h8M2 7h6M7 6v5', '#444'),
  cont: p('M2 1v10M6 3v8M10 1v10M2 6h8', '#444'),
  lead: p('M2 10 5 5h5', '#444') + p('M5 2l4 5', GOLD, 'none', 3),
  tol: p('M1.500 3.500h9v6h-9z', '#397098', '#b0dce8') + c(5, 6, 2, '#276'),
  center: c(6, 6, 4.5, '#555') + p('M4 6h4M6 4v4', '#222'),
  edit: p('M1 10h10M3 8 6 2l3 6M4 6h4', '#334'),
  tedit: p('M2 10h9M5 8l4-6', '#a86c30', 'none', 2),
  upd: p('M2 1v10M10 1v10M2 4h8M4 8h4V5', '#445'),
  dstyle: p('M1 10h10M3 9l6-6v6z', '#333', '#555'),
  o1: p('M1 1h7v7H1z', '#3d6c98', '#a0c4e0') + p('M4 5h7v5H4z', '#3d6c98', '#e0f0fa'),
  o2: p('M2 2h8v8H2z', '#3d78b0', '#9cc8f0', 2),
  o3: p('M5 1h5v9H1V6h4z', '#3d6c98', '#90bce0'),
  o4: p('M1 1h6v5H1z', '#556', '#e0e0a8') + p('M5 6h6v5H5z', '#3d6c98', '#a0c4e0'),
  o5: p('M1 1h5v9H1z', '#356', '#6c9cc4') + p('M6 4l5-2M6 7l5 3', '#345', 'none', 2),
  n1: p('M3 10Q0 3 6 2t3 7', '#555') + corner,
  n2: p('M2 9V4l5-2-3 5 5 2', '#555') + corner,
  n3: p('m2 3 7 6M3 8l4-5v6', '#555') + corner,
  n4: p('M2 10Q2 4 5 4t4 5M5 6l4-4', '#555') + corner,
  n5: p('M2 5l4 3 3-4M3 9h5', '#444') + corner,
  n6: p('M2 9l4-6 3 6M6 1v8', '#555') + corner,
  n7: p('M3 4q4-4 5 0L3 8q0 3 5 1', '#555') + corner,
  n8: p('M2 5q0 5 4 5t4-5M6 2v7', '#555') + corner,
  n9: p('M2 2l5 6h3', '#333') + corner,
  n10: p('M4 2v8M8 4v6', '#333', 'none', 2) + corner,
  n11: p('M2 10V6h4l3-4', '#444') + p('M5 8h3', '#333', 'none', 2) + corner,
  n12: p('M2 10l2-6 3 4 3-5', '#555') + corner,
};

document.querySelectorAll('[data-icons]').forEach(group => {
  group.innerHTML = group.dataset.icons.split('|').map(name => {
    if (name === '-') return '<span class="split"></span>';
    if (name.startsWith('t:')) return `<button class="tool word">${name.slice(2)}</button>`;
    if (name.startsWith('b:')) return `<button class="tool strong">${name.slice(2)}</button>`;
    return `<button class="tool" aria-label="${name}"><svg viewBox="0 0 12 12">${ICONS[name]}</svg></button>`;
  }).join('');
});
```
